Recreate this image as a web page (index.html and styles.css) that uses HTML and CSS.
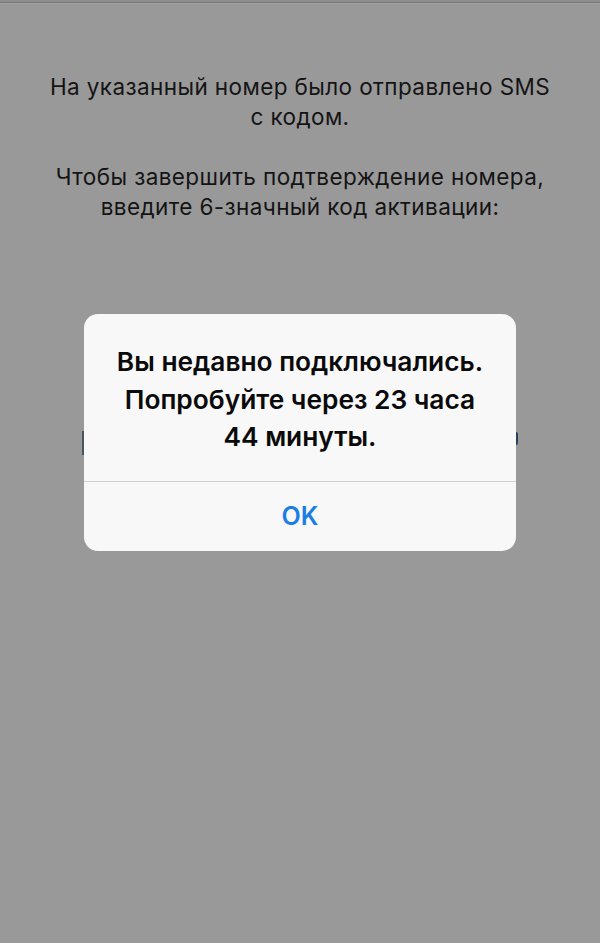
FILE: index.html
```
<!DOCTYPE html>
<html lang="ru">
<head>
<meta charset="utf-8">
<link rel="stylesheet" href="styles.css">
</head>
<body>
<div class="topline"></div>
<main class="content">
  <p class="info">На указанный номер было отправлено SMS<br>с кодом.</p>
  <p class="info">Чтобы завершить подтверждение номера,<br>введите 6-значный код активации:</p>
  <div class="code-row">
    <span class="code-bar"></span>
    <span class="code-dot"></span>
  </div>
</main>
<div class="alert">
  <div class="alert-body">Вы недавно подключались.<br>Попробуйте через 23 часа<br>44 минуты.</div>
  <div class="alert-actions"><span class="alert-btn">OK</span></div>
</div>
</body>
</html>
```
FILE: styles.css
```
html, body {
  margin: 0;
  padding: 0;
}
body {
  width: 600px;
  height: 943px;
  background: #999999;
  font-family: Inter, "Noto Sans", sans-serif;
  position: relative;
  overflow: hidden;
}
.topline {
  height: 2px;
  background: #8d8d8d;
  border-bottom: 1px solid #777777;
  box-shadow: 0 1px 0 #a2a2a2;
}
.content {
  padding-top: 69px;
}
.info {
  margin: 0 0 30px 0;
  text-align: center;
  font-size: 22.5px;
  line-height: 30px;
  color: #141414;
  letter-spacing: 0.4px;
}
.code-row {
  margin: 209px 82px 0 82px;
  height: 24px;
  display: flex;
  justify-content: space-between;
  align-items: flex-start;
}
.code-bar {
  width: 2px;
  height: 24px;
  background: #4a5562;
}
.code-dot {
  width: 4px;
  height: 13px;
  margin-top: 1px;
  border-radius: 2px;
  background: #2a3f58;
}
.alert {
  position: absolute;
  left: 84px;
  top: 314px;
  width: 432px;
  height: 237px;
  background: #f8f8f9;
  border-radius: 14px;
  display: flex;
  flex-direction: column;
  overflow: hidden;
}
.alert-body {
  padding: 29px 20px 0 20px;
  height: 138px;
  text-align: center;
  font-size: 26.3px;
  font-weight: 600;
  line-height: 37.5px;
  color: #0a0a0a;
  border-bottom: 1px solid #cfcfd2;
}
.alert-actions {
  flex: 1;
  display: flex;
  align-items: center;
  justify-content: center;
}
.alert-btn {
  font-size: 25px;
  font-weight: 600;
  color: #1a7ee6;
  margin-top: -1px;
}
```
